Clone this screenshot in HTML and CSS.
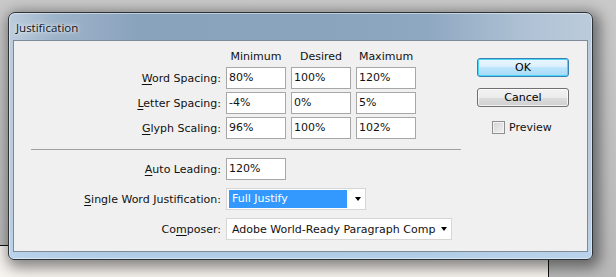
FILE: index.html
```html
<!DOCTYPE html>
<html lang="en">
<head>
    <meta charset="UTF-8">
    <title>Justification</title>
    <link rel="stylesheet" href="styles.css">
</head>
<body>
    <div class="desktop">
        <div class="back-window"></div>

        <div class="dialog">
            <div class="titlebar">
                <span class="title">Justification</span>
            </div>

            <div class="client">
                <div class="form">
                    <div class="spacing">
                        <span></span>
                        <span class="colhead">Minimum</span>
                        <span class="colhead">Desired</span>
                        <span class="colhead">Maximum</span>

                        <label class="lbl"><u>W</u>ord Spacing:</label>
                        <div class="field">80%</div>
                        <div class="field">100%</div>
                        <div class="field">120%</div>

                        <label class="lbl"><u>L</u>etter Spacing:</label>
                        <div class="field">-4%</div>
                        <div class="field">0%</div>
                        <div class="field">5%</div>

                        <label class="lbl"><u>G</u>lyph Scaling:</label>
                        <div class="field">96%</div>
                        <div class="field">100%</div>
                        <div class="field">102%</div>
                    </div>

                    <div class="rule"></div>

                    <div class="options">
                        <label class="lbl"><u>A</u>uto Leading:</label>
                        <div><div class="field">120%</div></div>

                        <label class="lbl"><u>S</u>ingle Word Justification:</label>
                        <div>
                            <div class="select select-short">
                                <span class="selected">Full Justify</span>
                                <span class="arrow"></span>
                            </div>
                        </div>

                        <label class="lbl">Co<u>m</u>poser:</label>
                        <div>
                            <div class="select select-long">
                                <span class="value">Adobe World-Ready Paragraph Comp</span>
                                <span class="arrow"></span>
                            </div>
                        </div>
                    </div>
                </div>

                <div class="actions">
                    <button class="btn btn-default">OK</button>
                    <button class="btn">Cancel</button>
                    <label class="check"><span class="box"></span>Preview</label>
                </div>
            </div>
        </div>
    </div>
</body>
</html>
```

FILE: styles.css
```css
* {
    margin: 0;
    padding: 0;
    box-sizing: border-box;
}

html,
body {
    width: 616px;
    height: 277px;
    overflow: hidden;
}

body {
    background: linear-gradient(180deg, #c9c9c9 0%, #b9b9b9 100%);
    font-family: "DejaVu Sans", sans-serif;
    font-size: 11px;
    color: #111;
}

.desktop {
    position: relative;
    width: 616px;
    height: 277px;
    overflow: hidden;
}

/* window lying behind the dialog */
.back-window {
    position: absolute;
    left: -1px;
    top: 245px;
    width: 550px;
    height: 32px;
    background: #f7f4f0;
    border-top: 1px solid #111;
    border-right: 1px solid #111;
}

.dialog {
    position: absolute;
    left: 8px;
    top: 12px;
    width: 585px;
    height: 248px;
    display: flex;
    flex-direction: column;
    padding: 0 4px 7px 4px;
    border: 1px solid #2e3338;
    border-radius: 7px 7px 6px 6px;
    background:
        linear-gradient(180deg, rgba(255, 255, 255, 0) 80%, rgba(185, 212, 238, 0.9) 100%),
        linear-gradient(90deg, #bccddd 0%, #9db3c9 8%, #8aa3bd 22%, #8ba4be 55%, #8fa8c1 72%, #aec1d4 88%, #bbcbdb 100%);
    box-shadow: 3px 4px 14px 4px rgba(0, 0, 0, 0.45), inset 0 0 0 1px rgba(255, 255, 255, 0.45);
}

.titlebar {
    height: 27px;
    display: flex;
    align-items: center;
    padding-left: 3px;
}

.title {
    font-family: "Open Sans", sans-serif;
    font-size: 11.5px;
    color: #10131a;
    padding-top: 2px;
    text-shadow: 0 0 6px rgba(255, 255, 255, 0.9), 0 0 3px rgba(255, 255, 255, 0.8);
}

.client {
    flex: 1;
    display: flex;
    background: #f0f0f0;
    border: 1px solid #7d8a97;
}

.form {
    flex: 1;
}

/* spacing table */
.spacing {
    display: grid;
    grid-template-columns: 207px 60px 60px 60px;
    grid-template-rows: 15px 22px 22px 22px;
    column-gap: 5px;
    row-gap: 3px;
    margin-top: 8px;
}

.colhead {
    text-align: center;
    line-height: 15px;
}

.lbl {
    text-align: right;
    align-self: center;
}

.lbl u {
    text-underline-offset: 2px;
}

.field {
    width: 60px;
    height: 22px;
    line-height: 20px;
    padding-left: 2px;
    background: #fff;
    border: 1px solid #a7a7a7;
}

.rule {
    width: 430px;
    height: 1px;
    margin: 10px 0 0 17px;
    background: #a0a0a0;
}

.options {
    display: grid;
    grid-template-columns: 207px auto;
    grid-auto-rows: 22px;
    column-gap: 5px;
    row-gap: 8px;
    margin-top: 8px;
}

.select {
    height: 22px;
    display: flex;
    align-items: center;
    justify-content: space-between;
    padding: 0 4px 0 2px;
    background: #fff;
    border: 1px solid #d6d6d6;
}

.select-short {
    width: 140px;
}

.select-long {
    width: 226px;
}

.selected {
    width: 118px;
    height: 18px;
    line-height: 18px;
    padding-left: 3px;
    background: #3399ff;
    color: #fff;
}

.value {
    padding-left: 3px;
}

.arrow {
    width: 0;
    height: 0;
    border-left: 3.5px solid transparent;
    border-right: 3.5px solid transparent;
    border-top: 4px solid #000;
}

/* buttons column */
.actions {
    width: 92px;
    margin: 17px 18px 0 0;
    display: flex;
    flex-direction: column;
}

.btn {
    height: 19px;
    font-family: "DejaVu Sans", sans-serif;
    font-size: 11px;
    color: #000;
    border: 1px solid #707070;
    border-radius: 3px;
    background: linear-gradient(180deg, #f2f2f2 0%, #ebebeb 50%, #dddddd 50%, #cfcfcf 100%);
    box-shadow: inset 0 0 0 1px rgba(255, 255, 255, 0.7);
}

.btn + .btn {
    margin-top: 11px;
}

.btn-default {
    border-color: #3c7fb1;
    background: linear-gradient(180deg, #eaf6fd 0%, #d9f0fc 50%, #bee6fd 50%, #a7d9f5 100%);
    box-shadow: inset 0 0 0 1px #48d7fb;
}

.check {
    display: flex;
    align-items: center;
    margin: 14px 0 0 15px;
}

.box {
    width: 13px;
    height: 13px;
    margin-right: 4px;
    border: 1px solid #8e8f8f;
    background: linear-gradient(135deg, #d3d3d3 0%, #f2f2f2 100%);
    box-shadow: inset 0 0 0 1px #f4f4f4;
}
```
